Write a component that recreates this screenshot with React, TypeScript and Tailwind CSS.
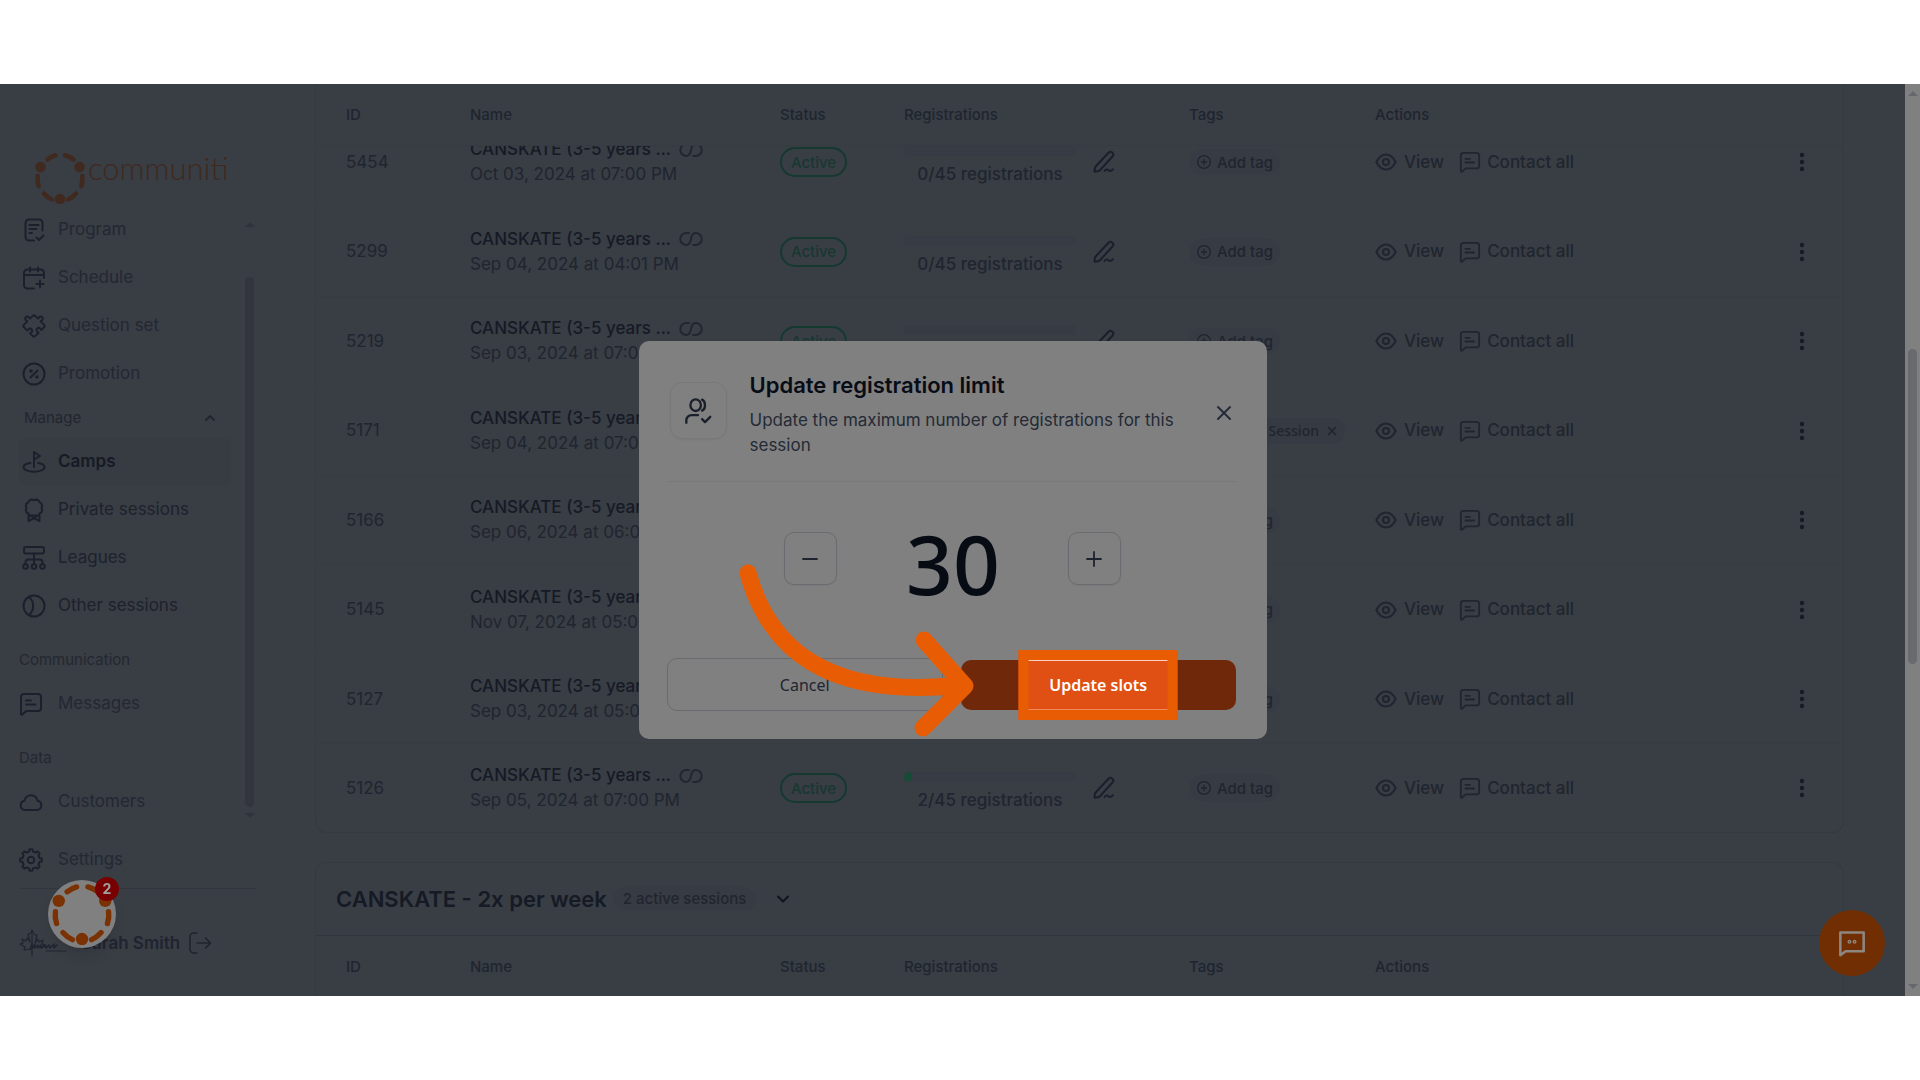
import React from 'react';
import { ChevronDown, ChevronUp, Minus, Plus, X } from 'lucide-react';

type IconProps = { className?: string; children?: React.ReactNode; strokeWidth?: number };

const Icon: React.FC<IconProps> = ({ className = 'size-6', children, strokeWidth = 2 }) => (
  <svg viewBox="0 0 24 24" fill="none" stroke="currentColor" strokeWidth={strokeWidth} strokeLinecap="round" strokeLinejoin="round" className={`shrink-0 ${className}`} aria-hidden="true">
    {children}
  </svg>
);

const ProgramIcon = () => (
  <Icon>
    <path d="M20.500 12.500V5A3.500 3.500 0 0 0 17 1.500H7A3.500 3.500 0 0 0 3.500 5v14A3.500 3.500 0 0 0 7 22.500h5" />
    <path d="M7.500 7h9M7.500 11h7M7.500 15h2.500M14.500 19.500l2.500 2.500 4.500-4.500" />
  </Icon>
);

const ScheduleIcon = () => (
  <Icon>
    <path d="M22 12V7a3.500 3.500 0 0 0-3.500-3.500h-13A3.500 3.500 0 0 0 2 7v12a3.500 3.500 0 0 0 3.500 3.500H12" />
    <path d="M2 9h20M8 1.500v4M16 1.500v4M18 14.500v7M14.500 18h7" />
  </Icon>
);

const PuzzleIcon = () => (
  <Icon>
    <g transform="rotate(45 12 12)">
      <path d="M4 6a2 2 0 0 1 2-2h3.200c.6 0 .5-.6.300-1.200C9 1 10.200 0 11.500 0S14 1 13.500 2.800c-.2.600-.3 1.200.3 1.200H18a2 2 0 0 1 2 2v3.200c0 .6-.6.500-1.200.3-1.800-.5-2.800.7-2.800 2s1 2.500 2.800 2c.6-.2 1.200-.3 1.200.3V18a2 2 0 0 1-2 2h-3.200c-.6 0-.5-.6-.3-1.200.5-1.800-.7-2.800-2-2.800s-2.500 1-2 2.800c.2.600.3 1.200-.3 1.200H6a2 2 0 0 1-2-2v-4.200c0-.6-.6-.5-1.200-.3C1 14 0 12.800 0 11.500S1 9 2.800 9.500c.6.2 1.200.3 1.200-.3z" />
    </g>
  </Icon>
);

const PromotionIcon = () => (
  <Icon>
    <circle cx="12" cy="12" r="10.500" />
    <path d="M8.500 15.500l7-7" />
    <circle cx="9" cy="9" r=".8" />
    <circle cx="15" cy="15" r=".8" />
  </Icon>
);

const GolfIcon = () => (
  <Icon>
    <path d="M12 17V2l6 4-6 3.500" />
    <path d="M8.500 13C4.500 13.500 1.500 15 1.500 17.200c0 2.600 4.700 4.500 10.500 4.500s10.500-1.900 10.500-4.500c0-2.200-2.600-3.600-6.500-4.200" />
  </Icon>
);

const AwardIcon = () => (
  <Icon>
    <path d="M9.500 1.500q2.500 1.200 5 0l2.300 1.200q.6 2 2.700 2.800l.7 2.500q-1.200 2 0 4l-.7 2.300q-2.300.9-2.900 3.200H7.400q-.6-2.300-2.900-3.200L3.800 12q1.200-2 0-4l.7-2.500q2.100-.8 2.700-2.800z" />
    <path d="M6.500 17.500V23l5.500-2.700 5.500 2.700v-5.500M8 17.500l4 2.500 4-2.500" />
  </Icon>
);

const LeaguesIcon = () => (
  <Icon>
    <rect x="2" y="1" width="20" height="6.500" rx="2" />
    <circle cx="3.500" cy="20.500" r="2.300" />
    <circle cx="12" cy="20.500" r="2.300" />
    <circle cx="20.500" cy="20.500" r="2.300" />
    <path d="M12 7.500V18M3.500 18v-1.500a3 3 0 0 1 3-3h11a3 3 0 0 1 3 3V18" />
  </Icon>
);

const BallIcon = () => (
  <Icon>
    <circle cx="12" cy="12" r="10.500" />
    <path d="M7 3c5.500 4.500 5.500 13.500 0 18" />
  </Icon>
);

const MessageIcon: React.FC<IconProps> = ({ className }) => (
  <Icon className={className}>
    <path d="M2 5a3 3 0 0 1 3-3h14a3 3 0 0 1 3 3v11a3 3 0 0 1-3 3H8.500c-1 0-1.800.300-2.500 1l-2.500 2.500c-.6.500-1.500.2-1.500-.7z" />
    <path d="M7 8.500h5M7 12.500h9.500" />
  </Icon>
);

const CloudIcon = () => (
  <Icon>
    <path d="M6 20A4.700 4.700 0 0 1 5.500 10.700a6.600 6.600 0 0 1 13 0A4.700 4.700 0 0 1 18 20z" />
  </Icon>
);

const GearIcon = () => (
  <Icon>
    <path d="M10 3.500l.6-2.300h2.800l.6 2.300 2.600 1.100 2-1.200 2 2-1.200 2L20.500 10l2.300.6v2.800l-2.300.6-1.100 2.600 1.200 2-2 2-2-1.200L14 20.500l-.6 2.300h-2.800l-.6-2.300-2.600-1.100-2 1.200-2-2 1.200-2L3.500 14l-2.300-.6v-2.800l2.300-.6 1.100-2.600-1.200-2 2-2 2 1.200z" />
    <circle cx="12" cy="12" r="3.300" />
  </Icon>
);

const LogoutIcon = () => (
  <Icon strokeWidth={1.600}>
    <path d="M9 2H6a4 4 0 0 0-4 4v12a4 4 0 0 0 4 4h3M9 12h13M17.500 7l5 5-5 5" />
  </Icon>
);

const LinkIcon = () => (
  <Icon>
    <path d="M9.800 6H7.300a6 6 0 0 0 0 12C11 18 11.300 15 12 12s1-6 4.700-6a6 6 0 0 1 0 12h-2.500" />
  </Icon>
);

const PenIcon = () => (
  <Icon>
    <path d="M16.500 2.800a2.700 2.700 0 0 1 4 3.700L8 20.200c-.6.600-1.300 1-2.200 1.100l-3.300.4.300-3.400c.1-.8.400-1.500 1-2.100z" />
    <path d="M12.500 21c1.200-1.600 2.500-2 3.700-1 1.300 1.200 3 1.500 4.800-.800" />
  </Icon>
);

const EyeIcon = () => (
  <Icon className="size-[22px]" strokeWidth={2.300}>
    <path d="M1.500 12C4 7 7.600 3.800 12 3.800S20 7 22.500 12C20 17 16.400 20.200 12 20.200S4 17 1.500 12z" />
    <circle cx="12" cy="12" r="3.300" />
  </Icon>
);

const DotsIcon = () => (
  <svg viewBox="0 0 24 24" fill="currentColor" className="size-6" aria-hidden="true">
    <circle cx="12" cy="5" r="2.200" />
    <circle cx="12" cy="12" r="2.200" />
    <circle cx="12" cy="19" r="2.200" />
  </svg>
);

const RingLogo: React.FC<{ className: string }> = ({ className }) => (
  <svg viewBox="0 0 52 52" className={className} fill="none" stroke="currentColor" strokeWidth="4.500" strokeLinecap="round" aria-hidden="true">
    <path d="M13.500 7.500Q17.500 4.300 21.500 3.300M31 3.300q4.500 1 8.500 4.200M3.700 24q-.700 5 1 10M48.300 24q.700 5-1 10M10 41.500q3.500 4 8 6M42 41.500q-3.500 4-8 6" />
    <g fill="currentColor" stroke="none">
      <circle cx="6.500" cy="15" r="5.200" />
      <circle cx="45.500" cy="15" r="5.200" />
      <circle cx="26" cy="47" r="5.200" />
    </g>
  </svg>
);

const LeafLogo = () => (
  <svg viewBox="0 0 48 28" className="h-7 w-12 shrink-0" fill="none" stroke="currentColor" strokeLinecap="round" strokeLinejoin="round" aria-hidden="true">
    <path d="M13 27V6M13 20L5 21l1-3-5-3 3-1-1-4 4 2 1-3 3 4-2-8 3-.500L13 1l2 4.500 3 .500-2 8 3-4 1 3 4-2-1 4 3 1-5 3" strokeWidth="1.200" />
    <path d="M11 20l2-5 1 4 2-4 0 4 3-3 0 3 3-3 1 3 3-3 1 3 3-3 1 3 4-4 0 4 3-3" strokeWidth="1.500" />
    <path d="M27 22h20" strokeWidth="1" strokeDasharray="2 1" />
  </svg>
);

const mainItems = [
  { label: 'Program', icon: ProgramIcon },
  { label: 'Schedule', icon: ScheduleIcon },
  { label: 'Question set', icon: PuzzleIcon },
  { label: 'Promotion', icon: PromotionIcon },
];

const manageItems = [
  { label: 'Camps', icon: GolfIcon, active: true },
  { label: 'Private sessions', icon: AwardIcon },
  { label: 'Leagues', icon: LeaguesIcon },
  { label: 'Other sessions', icon: BallIcon },
];

const sessions = [
  { id: 5454, date: 'Oct 03, 2024 at 07:00 PM', count: 0 },
  { id: 5299, date: 'Sep 04, 2024 at 04:01 PM', count: 0 },
  { id: 5219, date: 'Sep 03, 2024 at 07:00 PM', count: 0 },
  { id: 5171, date: 'Sep 04, 2024 at 07:00 PM', count: 0, tag: 'Summer Session' },
  { id: 5166, date: 'Sep 06, 2024 at 06:00 PM', count: 0 },
  { id: 5145, date: 'Nov 07, 2024 at 05:00 PM', count: 0 },
  { id: 5127, date: 'Sep 03, 2024 at 05:00 PM', count: 0 },
  { id: 5126, date: 'Sep 05, 2024 at 07:00 PM', count: 2 },
];

const columns = [
  { label: 'ID', width: 'w-[124px]' },
  { label: 'Name', width: 'w-[310px]' },
  { label: 'Status', width: 'w-[124px]' },
  { label: 'Registrations', width: 'w-[285px]' },
  { label: 'Tags', width: 'w-[186px]' },
  { label: 'Actions', width: '' },
];

type NavItemProps = { label: string; icon: React.FC; active?: boolean; muted?: boolean; inset?: boolean };

const NavItem: React.FC<NavItemProps> = ({ label, icon: ItemIcon, active, muted, inset = true }) => (
  <a
    href="#"
    className={`flex h-12 items-center rounded-lg text-[17px] ${inset ? 'gap-3 pl-[3px]' : 'gap-[15px]'} ${
      active ? 'bg-[#373b42] font-semibold text-[#151a25]' : muted ? 'text-[#232833]' : 'text-[#1d222d]'
    }`}
  >
    <span className="text-[#1b202d]"><ItemIcon /></span>
    {label}
  </a>
);

const Sidebar = () => (
  <aside className="flex w-[278px] shrink-0 flex-col border-r border-[#373b42] pt-[68px] pl-[19px]">
    <div className="flex h-[54px] items-start pl-[15px] text-[#40291f]">
      <RingLogo className="size-[52px] shrink-0" />
      <span className="pl-[2px] font-['Lato'] text-[31px] leading-8 font-light">communiti</span>
    </div>
    <div className="flex">
      <nav className="w-[212px]">
        {mainItems.map((item) => (
          <NavItem key={item.label} muted {...item} />
        ))}
        <button type="button" className="flex h-10 w-full items-center justify-between pr-[13px] pl-[5px] text-[15px] text-[#22262f]">
          Manage
          <ChevronUp className="size-4" strokeWidth={3} />
        </button>
        {manageItems.map((item) => (
          <NavItem key={item.label} {...item} />
        ))}
        <h3 className="pt-5 pb-[10px] text-[15px] leading-5 text-[#242831]">Communication</h3>
        <NavItem label="Messages" icon={MessageIcon} muted inset={false} />
        <h3 className="pt-5 pb-[10px] text-[15px] leading-5 text-[#242831]">Data</h3>
        <NavItem label="Customers" icon={CloudIcon} muted inset={false} />
      </nav>
      <div className="ml-[14px] flex w-[9px] flex-col items-center pt-4 pb-[8px] text-[#30333b]">
        <span className="border-x-[5px] border-b-[5px] border-x-transparent border-b-current" />
        <span className="mt-[50px] mb-[6px] w-full flex-1 rounded-full bg-[#32353d]" />
        <span className="border-x-[5px] border-t-[5px] border-x-transparent border-t-current" />
      </div>
    </div>
    <div className="mr-5 border-b border-[#31353d] pt-[10px] pb-[4px]">
      <NavItem label="Settings" icon={GearIcon} muted inset={false} />
    </div>
    <div className="flex items-center pt-10 text-[17px] leading-6 text-[#1f2430]">
      <LeafLogo />
      <span className="pl-[14px] font-semibold">Sarah Smith</span>
      <button type="button" aria-label="Log out" className="pl-2">
        <LogoutIcon />
      </button>
    </div>
  </aside>
);

const TableHead = () => (
  <thead>
    <tr>
      {columns.map((column) => (
        <th key={column.label} scope="col" className={`sticky top-0 z-10 h-[62px] border-b border-[#363a41] bg-[#393d44] px-[30px] text-left text-[15px] font-medium text-[#1f252f] ${column.width}`}>
          {column.label}
        </th>
      ))}
    </tr>
  </thead>
);

const cell = 'border-b border-[#373b42] px-[30px] group-last:border-b-0';

const SessionRow: React.FC<{ session: (typeof sessions)[number] }> = ({ session }) => (
  <tr className="group">
    <td className={cell}>{session.id}</td>
    <td className={cell}>
      <div className="flex items-center gap-2 font-medium text-[#151a25]">
        <a href="#">CANSKATE (3-5 years ...</a>
        <span className="text-[#212632]"><LinkIcon /></span>
      </div>
      <div>{session.date}</div>
    </td>
    <td className={cell}>
      <span className="flex h-[30px] w-[67px] items-center justify-center rounded-full border-2 border-[#14392f] text-[15px] font-medium text-[#173831]">Active</span>
    </td>
    <td className={cell}>
      <div className="flex items-center gap-4">
        <div className="w-[172px] pt-[9px] text-center font-medium text-[#20252f]">
          <div className="mb-[6px] h-[10px] overflow-hidden rounded-full bg-[#373b43]">
            <div className="h-full rounded-full bg-[#174a37]" style={{ width: `${(session.count / 45) * 100}%` }} />
          </div>
          {session.count}/45 registrations
        </div>
        <button type="button" aria-label="Edit registration limit" className="text-[#1a1f2c]"><PenIcon /></button>
      </div>
    </td>
    <td className={cell}>
      {session.tag ? (
        <div className="flex justify-end">
          <span className="-mr-[30px] flex h-[26px] items-center gap-[6px] rounded-full bg-[#363a43] pr-[6px] pl-2 font-['Noto_Sans'] text-sm font-medium whitespace-nowrap">
            {session.tag}
            <X className="size-[14px]" strokeWidth={3} />
          </span>
        </div>
      ) : (
        <button type="button" className="flex h-[26px] items-center gap-[5px] rounded-full bg-[#373b43] px-[7px] text-[15px] font-medium whitespace-nowrap">
          <Icon className="size-4">
            <circle cx="12" cy="12" r="9.500" />
            <path d="M12 8v8M8 12h8" />
          </Icon>
          Add tag
        </button>
      )}
    </td>
    <td className={cell}>
      <div className="flex items-center font-medium">
        <a href="#" className="flex items-center gap-[7px]"><EyeIcon />View</a>
        <a href="#" className="ml-[15px] flex items-center gap-[6px]"><MessageIcon className="size-[22px]" />Contact all</a>
        <button type="button" aria-label="More actions" className="-mr-px ml-auto text-[#161b26]"><DotsIcon /></button>
      </div>
    </td>
  </tr>
);

const table = 'w-full table-fixed border-separate border-spacing-0 text-[17px] leading-[25px] text-[#20252f]';

const Sessions = () => (
  <main className="min-w-0 flex-1 pr-[61px] pl-[37px]">
    <section className="-mt-7 rounded-b-xl border-x border-b border-[#353940]">
      <table className={`h-[776px] ${table}`}>
        <TableHead />
        <tbody>
          {sessions.map((session) => (
            <SessionRow key={session.id} session={session} />
          ))}
        </tbody>
      </table>
    </section>
    <section className="mt-[29px] rounded-t-xl border-x border-t border-[#353940]">
      <header className="flex h-[73px] items-center border-b border-[#32363e] px-5">
        <h2 className="text-[22px] font-semibold text-[#151a25]">CANSKATE - 2x per week</h2>
        <span className="ml-[6px] rounded-full bg-[#373b43] px-[10px] text-[15px] leading-6 font-medium text-[#20252f]">2 active sessions</span>
        <button type="button" aria-label="Toggle sessions" className="ml-[17px] text-[#10141d]">
          <ChevronDown className="size-5" strokeWidth={2.500} />
        </button>
      </header>
      <table className={table}>
        <TableHead />
      </table>
    </section>
  </main>
);

const UpdateLimitDialog = () => (
  <div role="dialog" aria-labelledby="limit-title" className="relative w-[628px] rounded-[10px] bg-[#808080] pt-6 pr-[31px] pb-7 pl-7">
    <div className="flex h-[117px] items-start border-b border-[#797979]">
      <div className="mt-[17px] ml-[3px] flex size-[57px] shrink-0 items-center justify-center rounded-xl border border-[#787878] text-[#1a202b] shadow-xs">
        <Icon className="size-7">
          <ellipse cx="10" cy="7" rx="4.500" ry="5" />
          <path d="M15.500 2.300c3.300 1.400 3.300 8 0 9.400M2 22v-2a4.500 4.500 0 0 1 4.500-4.500H12M15.500 19l2.500 2.500 4.500-4.500" />
        </Icon>
      </div>
      <div className="flex-1 pt-1 pl-[23px]">
        <h1 id="limit-title" className="text-[22px] leading-8 font-semibold text-[#080c16]">Update registration limit</h1>
        <p className="mt-[7px] text-[17px] leading-[25px] text-[#242a35]">Update the maximum number of registrations for this session</p>
      </div>
      <button type="button" aria-label="Close" className="mt-9 text-[#242a38]">
        <X className="size-6" />
      </button>
    </div>
    <div className="flex items-center justify-between pt-[50px] pr-[115px] pl-[117px]">
      <button type="button" aria-label="Decrease" className="flex size-[53px] items-center justify-center rounded-[10px] border border-[#6a6b70] text-[#1d2330] shadow-xs">
        <Minus className="size-6" strokeWidth={1.800} />
      </button>
      <output className="h-[53px] pl-[2px] font-['Noto_Sans'] text-[82px] leading-[62px] font-medium text-[#060b14]">30</output>
      <button type="button" aria-label="Increase" className="flex size-[53px] items-center justify-center rounded-[10px] border border-[#6a6b70] text-[#1d2330] shadow-xs">
        <Plus className="size-6" strokeWidth={1.800} />
      </button>
    </div>
    <div className="mt-[73px] flex items-center gap-[18px] font-['Noto_Sans'] text-base">
      <button type="button" className="h-[53px] flex-1 rounded-[10px] border border-[#6a6b70] text-[#1f2531]">Cancel</button>
      <button type="button" className="relative h-[50px] flex-1 rounded-[10px] bg-[#70280a] font-semibold text-white">
        <span className="absolute -inset-y-[10px] left-1/2 flex w-[159px] -translate-x-1/2 items-center justify-center border-[10px] border-[#e85d04] bg-[#e04f14]">
          <span className="flex h-full w-full items-center justify-center border-y border-t-[#fbd3c0] border-b-[#f08a5a]">Update slots</span>
        </span>
      </button>
    </div>
    <svg viewBox="0 0 250 180" className="absolute top-[220px] left-[95px] h-[180px] w-[250px]" fill="none" stroke="#e85d04" strokeWidth="17" strokeLinecap="round" strokeLinejoin="round" aria-hidden="true">
      <path d="M14 12C34 85 91 139 228 124M190 79l41 46-42 42" />
    </svg>
  </div>
);

const App: React.FC = () => (
  <div className="flex h-screen flex-col bg-white py-[84px] font-['Inter',sans-serif]">
    <div className="relative flex min-h-0 flex-1 overflow-hidden bg-[#393d44]">
      <Sidebar />
      <Sessions />
      <div className="z-20 flex w-[15px] shrink-0 flex-col items-center bg-[#808080] py-[7px] text-[#65696e]">
        <span className="border-x-[5px] border-b-[5px] border-x-transparent border-b-current" />
        <span className="mt-[253px] h-[315px] w-[9px] rounded-full bg-[#676b70]" />
        <span className="mt-auto border-x-[5px] border-t-[5px] border-x-transparent border-t-current" />
      </div>

      <button type="button" aria-label="Open help" className="absolute bottom-12 left-12 z-20 flex size-[68px] items-center justify-center rounded-full bg-[#808080] text-[#7a3204] shadow-lg">
        <RingLogo className="size-[62px]" />
        <span className="absolute -top-[3px] -right-[3px] flex size-6 items-center justify-center rounded-full bg-[#790000] text-sm font-bold text-[#a0a0a0]">2</span>
      </button>
      <button type="button" aria-label="Open chat" className="absolute right-[35px] bottom-5 z-20 flex size-[66px] items-center justify-center rounded-full bg-[#702e02] text-[#8e8681]">
        <Icon className="size-7" strokeWidth={2.200}>
          <path d="M2 3h20v16H6.500L2 22.500z" />
          <circle cx="9.800" cy="11" r=".6" />
          <circle cx="14.200" cy="11" r=".6" />
        </Icon>
      </button>

      <div className="absolute inset-y-0 right-[15px] left-0 z-30 flex items-center justify-center">
        <UpdateLimitDialog />
      </div>
    </div>
  </div>
);

export default App;
